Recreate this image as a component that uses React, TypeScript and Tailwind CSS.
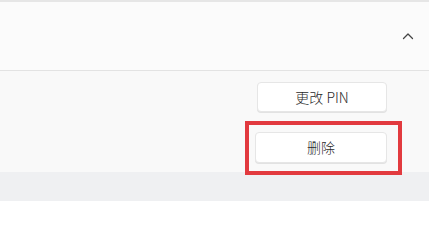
export default function App() {
  return (
    <div className="flex h-[201px] w-[429px] flex-col overflow-hidden bg-[#eff0f2] font-['Noto_Sans_CJK_SC',sans-serif]">
      <div className="h-[2px] bg-[#e6e6e6]" />
      <div className="flex h-[69px] items-center justify-end border-b border-[#e3e3e3] bg-[#fbfbfb] pr-[15px]">
        <svg width="12" height="8" viewBox="0 0 12 8" fill="none" className="mb-[1px]">
          <path d="M1.5 6.5 6 2l4.5 4.5" stroke="#444" strokeWidth="1.3" strokeLinecap="round" strokeLinejoin="round" />
        </svg>
      </div>
      <div className="flex h-[101px] flex-col items-end gap-[20px] bg-[#f9f9f9] pr-[42px] pt-[11px]">
        <button className="h-[30px] w-[130px] rounded-[4px] border border-[#e6e6e6] bg-white text-[14px] font-light text-[#2a2a2a] shadow-[0_1px_0_#e2e2e2]">
          更改 PIN
        </button>
        <div className="relative">
          <button className="h-[31px] w-[132px] rounded-[4px] border border-[#e6e6e6] bg-white text-[14px] font-light text-[#2a2a2a] shadow-[0_1px_0_#e2e2e2]">
            删除
          </button>
          <div className="pointer-events-none absolute left-[-10px] top-[-11px] h-[54px] w-[157px] border-4 border-[#e23a3f]" />
        </div>
      </div>
    </div>
  );
}
